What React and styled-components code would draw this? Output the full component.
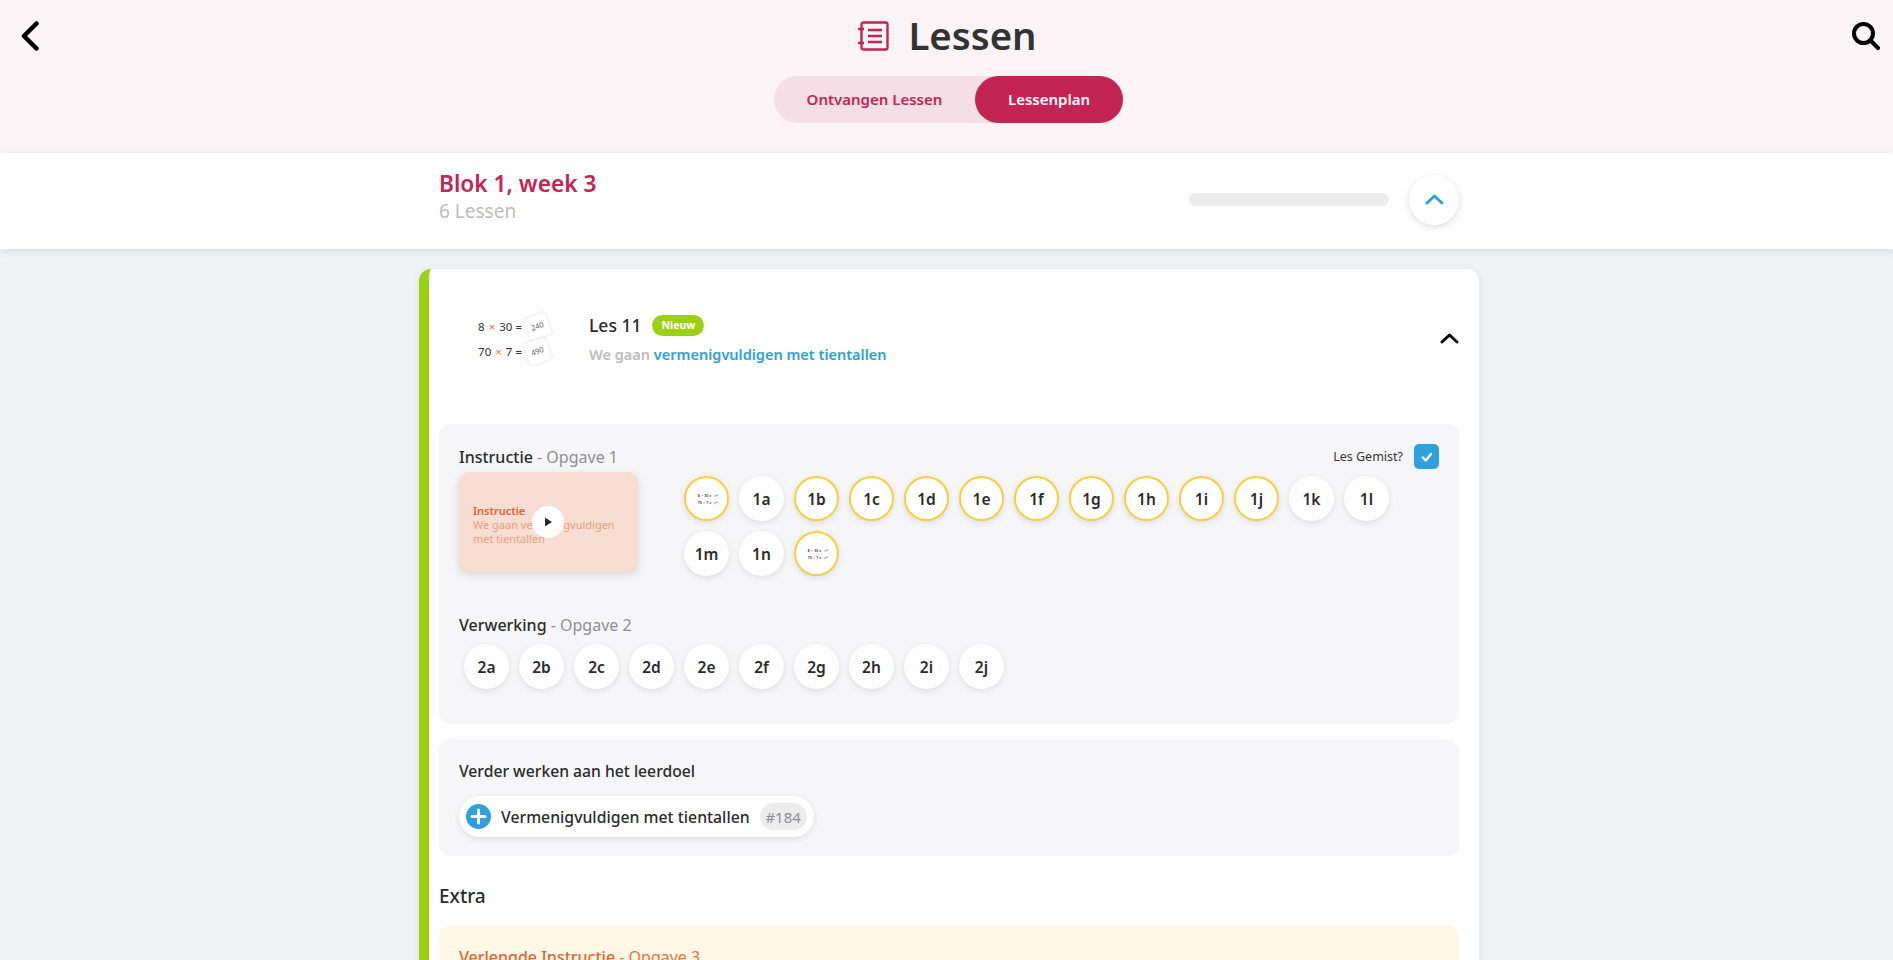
import styled, { createGlobalStyle } from "styled-components";

const GlobalStyle = createGlobalStyle`
  html, body {
    margin: 0;
    height: 100%;
    overflow: hidden;
    background: #f0f3f6;
    font-family: "Noto Sans", "Open Sans", sans-serif;
    color: #2b2b2b;
  }
`;

const Header = styled.header`
  background: #fbf4f6;
  height: 153px;
  padding: 18px 13px 0 21px;
  box-sizing: border-box;
`;

const TopRow = styled.div`
  display: flex;
  align-items: center;
  justify-content: space-between;
  height: 36px;
`;

const IconButton = styled.button`
  display: flex;
  padding: 0;
  border: 0;
  background: none;
  color: #000;
`;

const Title = styled.h1`
  display: flex;
  align-items: center;
  gap: 19px;
  margin: 0 0 0 4px;
  font-size: 38.4px;
  font-weight: 600;
  line-height: 36px;
  color: #333;
`;

const TitleText = styled.span`
  margin-top: -2px;
`;

const Tabs = styled.div`
  display: flex;
  width: 349px;
  height: 47px;
  margin: 22px auto 0;
  border-radius: 24px;
  background: #f5dfe6;
  transform: translateX(-2px);
`;

const Tab = styled.div`
  display: flex;
  align-items: center;
  justify-content: center;
  flex: ${({ $active }) => ($active ? "0 0 148px" : "1")};
  padding-bottom: 2px;
  box-sizing: border-box;
  border-radius: 24px;
  font-size: 15px;
  font-weight: 600;
  color: ${({ $active }) => ($active ? "#fff" : "#c42454")};
  background: ${({ $active }) => ($active ? "#c42454" : "transparent")};
`;

const BlockBar = styled.section`
  display: flex;
  align-items: center;
  justify-content: space-between;
  height: 96px;
  padding: 0 434px 0 439px;
  background: #fff;
  box-shadow: 0 2px 8px rgba(60, 70, 80, 0.14);
  position: relative;
`;

const BlockInfo = styled.div`
  margin-bottom: 10px;
`;

const BlockTitle = styled.div`
  font-size: 22.7px;
  font-weight: 600;
  line-height: 30px;
  color: #c42454;
`;

const BlockSub = styled.div`
  font-size: 19px;
  line-height: 25px;
  color: #bdbdbd;
`;

const BlockRight = styled.div`
  display: flex;
  align-items: center;
  gap: 20px;
  margin-bottom: 3px;
`;

const Progress = styled.div`
  width: 200px;
  height: 13px;
  border-radius: 7px;
  background: #ececec;
`;

const RoundButton = styled.div`
  display: flex;
  align-items: center;
  justify-content: center;
  width: 50px;
  height: 50px;
  border-radius: 50%;
  background: #fff;
  box-shadow: 0 2px 7px rgba(0, 0, 0, 0.14);
  color: #2fa0d9;
`;

const Card = styled.article`
  width: 1060px;
  margin: 20px 0 0 419px;
  padding: 0 20px 20px 10px;
  box-sizing: border-box;
  background: #fff;
  border-left: 10px solid #9dd015;
  border-radius: 12px;
  box-shadow: 0 1px 8px rgba(60, 70, 80, 0.1);
`;

const LessonHead = styled.div`
  display: flex;
  align-items: center;
  height: 155px;
  padding-bottom: 16px;
  box-sizing: border-box;
`;

const LessonThumb = styled.div`
  display: flex;
  flex-direction: column;
  gap: 2px;
  width: 85px;
  margin: 0 40px 0 25px;
`;

const SumRow = styled.div`
  display: flex;
  align-items: center;
  justify-content: flex-end;
  gap: 4px;
  font-size: 11.5px;
  line-height: 23px;
  color: #333;
`;

const Times = styled.span`
  color: #e8743a;
`;

const AnswerCard = styled.span`
  display: flex;
  align-items: center;
  justify-content: center;
  width: 23px;
  height: 23px;
  font-size: 7.5px;
  color: #666;
  background: #fff;
  border-radius: 3px;
  box-shadow: 0 0 3px rgba(0, 0, 0, 0.16);
  transform: rotate(-20deg);
`;

const LessonInfo = styled.div`
  flex: 1;
`;

const LessonTitleRow = styled.div`
  display: flex;
  align-items: center;
  gap: 11px;
  font-size: 17.5px;
  font-weight: 500;
  line-height: 26px;
  margin: -1px 0 6px;
`;

const Badge = styled.span`
  display: inline-flex;
  align-items: center;
  height: 21px;
  padding: 0 9px;
  border-radius: 11px;
  font-size: 10.5px;
  font-weight: 700;
  color: #fff;
  background: #9dd015;
`;

const LessonSub = styled.div`
  font-size: 14.5px;
  font-weight: 600;
  line-height: 20px;
  color: #bdbdbd;
`;

const Accent = styled.span`
  color: #2fa0d9;
`;

const Chevron = styled.div`
  display: flex;
  color: #000;
`;

const Panel = styled.div`
  padding: ${({ $pad }) => $pad};
  margin-bottom: 15px;
  border-radius: 12px;
  background: #f6f6f8;
`;

const PanelHead = styled.div`
  display: flex;
  align-items: center;
  justify-content: space-between;
  height: 25px;
`;

const ExerciseLabel = styled.div`
  margin-top: ${({ $top }) => $top || "0"};
  padding-top: 1px;
  font-size: 16px;
  font-weight: 500;
  line-height: 24px;
`;

const ExerciseSub = styled.span`
  font-weight: 400;
  color: #8e8e93;
`;

const Missed = styled.label`
  display: flex;
  align-items: center;
  gap: 11px;
  font-size: 12.5px;
  color: #333;
`;

const Checkbox = styled.span`
  display: flex;
  align-items: center;
  justify-content: center;
  width: 25px;
  height: 25px;
  border-radius: 5px;
  background: #2fa0d9;
  color: #fff;
`;

const InstructionRow = styled.div`
  display: flex;
  gap: 46px;
  margin-top: 3px;
`;

const VideoThumb = styled.div`
  flex: 0 0 179px;
  height: 100px;
  box-sizing: border-box;
  padding: 32px 14px 0;
  position: relative;
  border-radius: 10px;
  background: #f8ddd3;
  box-shadow: 0 3px 8px rgba(0, 0, 0, 0.12);
  font-size: 11px;
  line-height: 14px;
  color: #ee9f7f;
`;

const VideoTitle = styled.div`
  font-weight: 600;
  color: #e2622e;
`;

const PlayButton = styled.span`
  position: absolute;
  top: 34px;
  left: 73px;
  display: flex;
  align-items: center;
  justify-content: center;
  width: 32px;
  height: 32px;
  border-radius: 50%;
  background: #fff;
  color: #2b2b2b;
`;

const Bubbles = styled.div`
  display: flex;
  flex-wrap: wrap;
  gap: 10px;
  width: ${({ $w }) => $w};
  margin: ${({ $m }) => $m};
`;

const Bubble = styled.div`
  display: flex;
  align-items: center;
  justify-content: center;
  width: 45px;
  height: 45px;
  box-sizing: border-box;
  overflow: hidden;
  border-radius: 50%;
  background: #fff;
  border: ${({ $done }) => ($done ? "2.5px solid #f5d142" : "0")};
  box-shadow: 0 2px 6px rgba(0, 0, 0, 0.1);
  font-size: 15.5px;
  font-weight: 600;
  color: #2b2b2b;
`;

const MiniThumb = styled.div`
  flex: 0 0 85px;
  transform: scale(0.31);
`;

const SectionTitle = styled.div`
  font-size: 15.7px;
  font-weight: 500;
  line-height: 25px;
  margin-bottom: 12px;
`;

const GoalChip = styled.div`
  display: inline-flex;
  align-items: center;
  height: 41px;
  padding: 0 7px;
  border-radius: 21px;
  background: #fff;
  box-shadow: 0 2px 6px rgba(0, 0, 0, 0.1);
  font-size: 15.8px;
  font-weight: 500;
`;

const PlusIcon = styled.span`
  display: flex;
  align-items: center;
  justify-content: center;
  width: 25px;
  height: 25px;
  margin-right: 10px;
  border-radius: 50%;
  background: #2fa0d9;
  color: #fff;
`;

const GoalId = styled.span`
  display: flex;
  align-items: center;
  justify-content: center;
  width: 47px;
  height: 27px;
  margin-left: 10px;
  border-radius: 14px;
  background: #ececec;
  font-size: 15px;
  font-weight: 400;
  color: #8e8e93;
`;

const ExtraTitle = styled.h2`
  margin: 27px 0 16px;
  font-size: 19px;
  font-weight: 500;
  line-height: 26px;
`;

const ExtraPanel = styled.div`
  height: 200px;
  padding: 20px;
  border-radius: 12px;
  background: #fff8e6;
  font-size: 16px;
  font-weight: 500;
  line-height: 25px;
  color: #e2622e;
`;

const ExtraSub = styled.span`
  font-weight: 400;
  color: #e8743a;
`;

const Up = ({ w = 19, h = 11, width = 3 }) => (
  <svg width={w} height={h} viewBox="0 0 19 11" fill="none" stroke="currentColor" strokeWidth={width} strokeLinecap="round" strokeLinejoin="round">
    <path d="M2 9 L9.5 2 L17 9" />
  </svg>
);

const Sums = () => (
  <>
    <SumRow>8 <Times>×</Times> 30 = <AnswerCard>240</AnswerCard></SumRow>
    <SumRow>70 <Times>×</Times> 7 = <AnswerCard>490</AnswerCard></SumRow>
  </>
);

const row1 = [
  { thumb: true }, { l: "1a" }, { l: "1b", done: true }, { l: "1c", done: true }, { l: "1d", done: true },
  { l: "1e", done: true }, { l: "1f", done: true }, { l: "1g", done: true }, { l: "1h", done: true },
  { l: "1i", done: true }, { l: "1j", done: true }, { l: "1k" }, { l: "1l" }, { l: "1m" }, { l: "1n" }, { thumb: true },
];
const row2 = ["2a", "2b", "2c", "2d", "2e", "2f", "2g", "2h", "2i", "2j"];

const App = () => {
  return (
    <>
      <GlobalStyle />
      <Header>
        <TopRow>
          <IconButton>
            <svg width="18" height="30" viewBox="0 0 18 30" fill="none" stroke="currentColor" strokeWidth="4.5" strokeLinecap="round" strokeLinejoin="round">
              <path d="M15.5 2.5 L3 15 L15.5 27.5" />
            </svg>
          </IconButton>
          <Title>
            <svg width="31" height="30" viewBox="0 0 31 30" fill="none" stroke="#c42454" strokeWidth="2.4">
              <rect x="3.5" y="1.5" width="26" height="27" rx="2" />
              <path d="M0 8h6M0 22h6" />
              <path d="M10 9h14M10 15h14M10 21h14" />
            </svg>
            <TitleText>Lessen</TitleText>
          </Title>
          <IconButton>
            <svg width="28" height="28" viewBox="0 0 28 28" fill="none" stroke="currentColor" strokeWidth="4" strokeLinecap="round">
              <circle cx="11.5" cy="11.5" r="9.5" />
              <path d="M18.5 18.5 L26 26" />
            </svg>
          </IconButton>
        </TopRow>
        <Tabs>
          <Tab>Ontvangen Lessen</Tab>
          <Tab $active>Lessenplan</Tab>
        </Tabs>
      </Header>
      <BlockBar>
        <BlockInfo>
          <BlockTitle>Blok 1, week 3</BlockTitle>
          <BlockSub>6 Lessen</BlockSub>
        </BlockInfo>
        <BlockRight>
          <Progress />
          <RoundButton><Up /></RoundButton>
        </BlockRight>
      </BlockBar>
      <Card>
        <LessonHead>
          <LessonThumb><Sums /></LessonThumb>
          <LessonInfo>
            <LessonTitleRow>Les 11 <Badge>Nieuw</Badge></LessonTitleRow>
            <LessonSub>We gaan <Accent>vermenigvuldigen met tientallen</Accent></LessonSub>
          </LessonInfo>
          <Chevron><Up /></Chevron>
        </LessonHead>
        <Panel $pad="20px 20px 35px">
          <PanelHead>
            <ExerciseLabel>Instructie <ExerciseSub>- Opgave 1</ExerciseSub></ExerciseLabel>
            <Missed>
              Les Gemist?
              <Checkbox>
                <svg width="14" height="14" viewBox="0 0 24 24" fill="none" stroke="currentColor" strokeWidth="4" strokeLinecap="round" strokeLinejoin="round">
                  <path d="M5 13 L10 18 L19 7" />
                </svg>
              </Checkbox>
            </Missed>
          </PanelHead>
          <InstructionRow>
            <VideoThumb>
              <VideoTitle>Instructie</VideoTitle>
              We gaan vermenigvuldigen met tientallen
              <PlayButton>
                <svg width="12" height="12" viewBox="0 0 12 12" fill="currentColor"><path d="M3 1.5 L10 6 L3 10.5 Z" /></svg>
              </PlayButton>
            </VideoThumb>
            <Bubbles $w="755px" $m="4px 0 0">
              {row1.map((b, i) =>
                b.thumb ? (
                  <Bubble key={i} $done><MiniThumb><Sums /></MiniThumb></Bubble>
                ) : (
                  <Bubble key={i} $done={b.done}>{b.l}</Bubble>
                )
              )}
            </Bubbles>
          </InstructionRow>
          <ExerciseLabel $top="36px">Verwerking <ExerciseSub>- Opgave 2</ExerciseSub></ExerciseLabel>
          <Bubbles $w="100%" $m="7px 0 0 5px">
            {row2.map((l) => <Bubble key={l}>{l}</Bubble>)}
          </Bubbles>
        </Panel>
        <Panel $pad="20px 20px 19px">
          <SectionTitle>Verder werken aan het leerdoel</SectionTitle>
          <GoalChip>
            <PlusIcon>
              <svg width="17" height="17" viewBox="0 0 17 17" stroke="currentColor" strokeWidth="3" strokeLinecap="round"><path d="M8.5 2v13M2 8.5h13" /></svg>
            </PlusIcon>
            Vermenigvuldigen met tientallen
            <GoalId>#184</GoalId>
          </GoalChip>
        </Panel>
        <ExtraTitle>Extra</ExtraTitle>
        <ExtraPanel>Verlengde Instructie <ExtraSub>- Opgave 3</ExtraSub></ExtraPanel>
      </Card>
    </>
  );
};

export default App;
